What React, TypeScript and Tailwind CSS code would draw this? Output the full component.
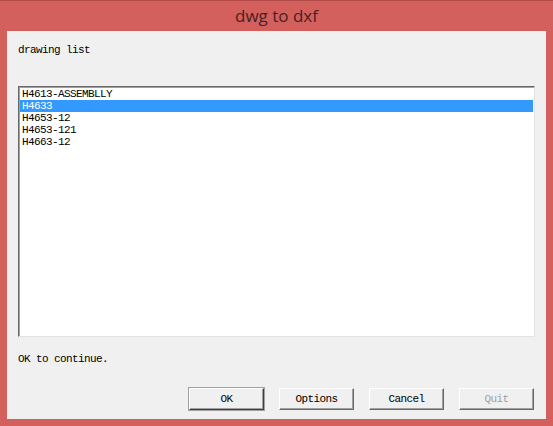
const items = ["H4613-ASSEMBLLY", "H4633", "H4653-12", "H4653-121", "H4663-12"]

const mono = "font-['Liberation_Mono',monospace] text-[11px] tracking-[-0.6px]"

const Btn = ({ label, disabled, primary }: { label: string; disabled?: boolean; primary?: boolean }) => (
  <button
    className={`w-[75px] h-[22px] bg-[#f0f0f0] border border-t-white border-l-white ${
      primary ? "border-r-[#404040] border-b-[#404040] ring-1 ring-[#a0a0a0]" : "border-r-[#696969] border-b-[#696969]"
    } shadow-[inset_-1px_-1px_0_#a0a0a0] ${mono} leading-[20px] ${disabled ? "text-[#a0a0a0]" : "text-black"}`}
  >
    {label}
  </button>
)

export default function App() {
  const selected = 1
  return (
    <div className="w-[553px] h-[426px] bg-[#d3605c] border-t border-[#b34b48] flex flex-col px-[7px] pb-[7px]">
      <div className="h-[30px] flex items-center justify-center text-[#4a2020] text-[17px] font-['Open_Sans','Noto_Sans',sans-serif]">
        dwg to dxf
      </div>
      <div className="flex-1 bg-[#f0f0f0] flex flex-col px-[11px]">
        <div className={`${mono} text-black mt-[13px] leading-[12px]`}>drawing list</div>
        <div className="mt-[30px] h-[251px] bg-white border border-t-[#696969] border-l-[#696969] border-r-[#e3e3e3] border-b-[#e3e3e3] shadow-[inset_1px_1px_0_#a0a0a0] pt-[1px] pl-[1px] pr-[1px]">
          {items.map((it, i) => (
            <div
              key={it}
              className={`${mono} leading-[12px] h-[12px] pl-[2px] ${i === selected ? "bg-[#3399ff] text-white" : "text-black"}`}
            >
              {it}
            </div>
          ))}
        </div>
        <div className={`${mono} text-black mt-[16px] leading-[12px]`}>OK to continue.</div>
        <div className="mt-[23px] flex justify-end gap-[15px] pr-[1px]">
          <Btn label="OK" primary />
          <Btn label="Options" />
          <Btn label="Cancel" />
          <Btn label="Quit" disabled />
        </div>
      </div>
    </div>
  )
}
